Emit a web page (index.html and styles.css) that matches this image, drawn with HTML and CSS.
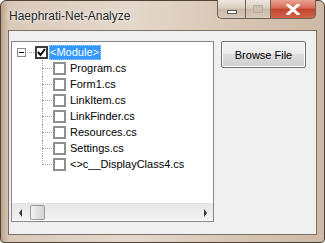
FILE: index.html
```html
<!DOCTYPE html>
<html>
<head>
<meta charset="utf-8">
<title>Haephrati-Net-Analyze</title>
<link rel="stylesheet" href="styles.css">
</head>
<body>
<div class="win">
  <div class="titlebar">
    <span class="title">Haephrati-Net-Analyze</span>
    <div class="capbtns">
      <span class="cap min"><i></i></span>
      <span class="cap max"><i></i></span>
      <span class="cap close">
        <svg width="14" height="11" viewBox="0 0 14 11"><path d="M2 1 L12 10 M12 1 L2 10" stroke="#fff" stroke-width="3" stroke-linecap="square"/></svg>
      </span>
    </div>
  </div>
  <div class="client">
    <div class="tree">
      <div class="nodes">
        <div class="row root">
          <span class="exp"><i></i></span>
          <span class="hdots"></span>
          <span class="cb on">
            <svg width="9" height="9" viewBox="0 0 9 9"><path d="M1 4 L3.5 7 L8 1" fill="none" stroke="#000" stroke-width="2"/></svg>
          </span>
          <span class="label sel">&lt;Module&gt;</span>
        </div>
        <div class="row kid"><span class="vl"></span><span class="hl"></span><span class="cb"></span><span class="label">Program.cs</span></div>
        <div class="row kid"><span class="vl"></span><span class="hl"></span><span class="cb"></span><span class="label">Form1.cs</span></div>
        <div class="row kid"><span class="vl"></span><span class="hl"></span><span class="cb"></span><span class="label">LinkItem.cs</span></div>
        <div class="row kid"><span class="vl"></span><span class="hl"></span><span class="cb"></span><span class="label">LinkFinder.cs</span></div>
        <div class="row kid"><span class="vl"></span><span class="hl"></span><span class="cb"></span><span class="label">Resources.cs</span></div>
        <div class="row kid"><span class="vl"></span><span class="hl"></span><span class="cb"></span><span class="label">Settings.cs</span></div>
        <div class="row kid last"><span class="vl"></span><span class="hl"></span><span class="cb"></span><span class="label">&lt;&gt;c__DisplayClass4.cs</span></div>
      </div>
      <div class="hscroll">
        <span class="arr left"></span>
        <span class="track"><span class="thumb"></span></span>
        <span class="arr right"></span>
      </div>
    </div>
    <button class="browse">Browse File</button>
  </div>
</div>
</body>
</html>
```

FILE: styles.css
```css
*{ margin:0; padding:0; box-sizing:border-box;}
body{ width:325px; height:243px; overflow:hidden; background:#fff;}
.win{ width:325px; height:243px; display:flex; flex-direction:column;
  background:linear-gradient(90deg,#b9a28b 0,#d9c9b9 8px,#e4d8cc 40%,#d8c7b6 70%,#cdb9a5 100%);
  border:1px solid #4e4236; border-radius:6px 6px 4px 4px; padding:0 7px 7px 7px;}
.titlebar{ height:29px; display:flex; align-items:flex-start; justify-content:space-between; position:relative;}
.title{ font-family:"Segoe UI","Liberation Sans",sans-serif; font-size:12px; color:#1e2a2a; margin-top:8px; margin-left:1px;
  text-shadow:0 0 6px #f4eee8,0 0 3px #f4eee8;}
.capbtns{ display:flex; margin-top:-1px; margin-right:1px;}
.cap{ height:19px; display:flex; align-items:center; justify-content:center;
  border:1px solid #6f6358; border-top:none; background:linear-gradient(#efe7df,#d9cdc1 45%,#c9b9a9 50%,#d8c9bb);}
.min{ width:28px; border-radius:0 0 0 5px; border-right:none;}
.min i{ display:block; width:10px; height:4px; background:#fff; border:1px solid #555; margin-top:5px;}
.max{ width:25px; border-right:none;}
.max i{ display:block; width:10px; height:8px; border:1px solid #b8aba0; box-shadow:inset 0 2px 0 #c9beb4;}
.close{ width:46px; border-radius:0 0 5px 0; background:linear-gradient(#e9a393,#d66c55 45%,#c4442c 50%,#d1634c);}
.client{ flex:1; background:#f0f0f0; border:1px solid #7d6f62; display:flex; align-items:flex-start; padding:10px 0 0 2px; gap:7px;}
.tree{ width:203px; height:181px; background:#fff; border:1px solid #828790; display:flex; flex-direction:column;}
.nodes{ flex:1; padding-top:2px; font-family:"Liberation Sans",Arial,sans-serif; font-size:11px; color:#000;}
.row{ height:16px; display:flex; align-items:center;}
.exp{ width:9px; height:9px; border:1px solid #8d8d8d; margin-left:5px; display:flex; align-items:center; justify-content:center; background:#fff;}
.exp i{ display:block; width:5px; height:1px; background:#000;}
.hdots{ width:7px; height:1px; border-top:1px dotted #a0a0a0; margin-left:1px;}
.cb{ width:13px; height:13px; border:2px solid #8e8f8f; background:#fff; display:flex; align-items:center; justify-content:center;}
.root .cb{ margin-left:1px; border-color:#3b3b3b;}
.label{ line-height:15px; padding:0 2px; margin-left:2px; white-space:nowrap;}
.sel{ background:#3399ff; color:#fff; outline:1px dotted #aad0ff; outline-offset:-1px; margin-left:1px; padding:0 2px 0 1px;}
.kid{ position:relative;}
.vl{ align-self:flex-start; width:1px; height:16px; border-left:1px dotted #a0a0a0; margin-left:30px;}
.last .vl{ height:9px;}
.hl{ width:10px; height:1px; border-top:1px dotted #a0a0a0; margin-left:-1px; margin-right:1px;}
.kid .label{ margin-left:2px;}
.hscroll{ height:17px; display:flex; align-items:center; background:linear-gradient(#e7e7e7,#f2f2f2); border-top:1px solid #e3e3e3; margin-bottom:1px;}
.arr{ width:17px; height:17px; position:relative;}
.arr.left::after{ content:""; position:absolute; left:7px; top:5px; border:4px solid transparent; border-right:3px solid #333; border-left:none;}
.arr.right::after{ content:""; position:absolute; left:8px; top:5px; border:4px solid transparent; border-left:3px solid #333; border-right:none;}
.track{ flex:1; height:17px; display:flex; align-items:center;}
.thumb{ width:15px; height:15px; margin-left:1px; border:1px solid #9a9a9a; border-radius:2px; background:linear-gradient(90deg,#f3f3f3,#e0e0e0 50%,#d4d4d4);}
.browse{ width:85px; height:27px; font-family:"Liberation Sans",Arial,sans-serif; font-size:11px; color:#000;
  border:1px solid #707070; border-radius:2px; background:linear-gradient(#f2f2f2,#ebebeb 50%,#dddddd 50%,#cfcfcf);
  box-shadow:inset 0 0 0 1px #fcfcfc;}
```
